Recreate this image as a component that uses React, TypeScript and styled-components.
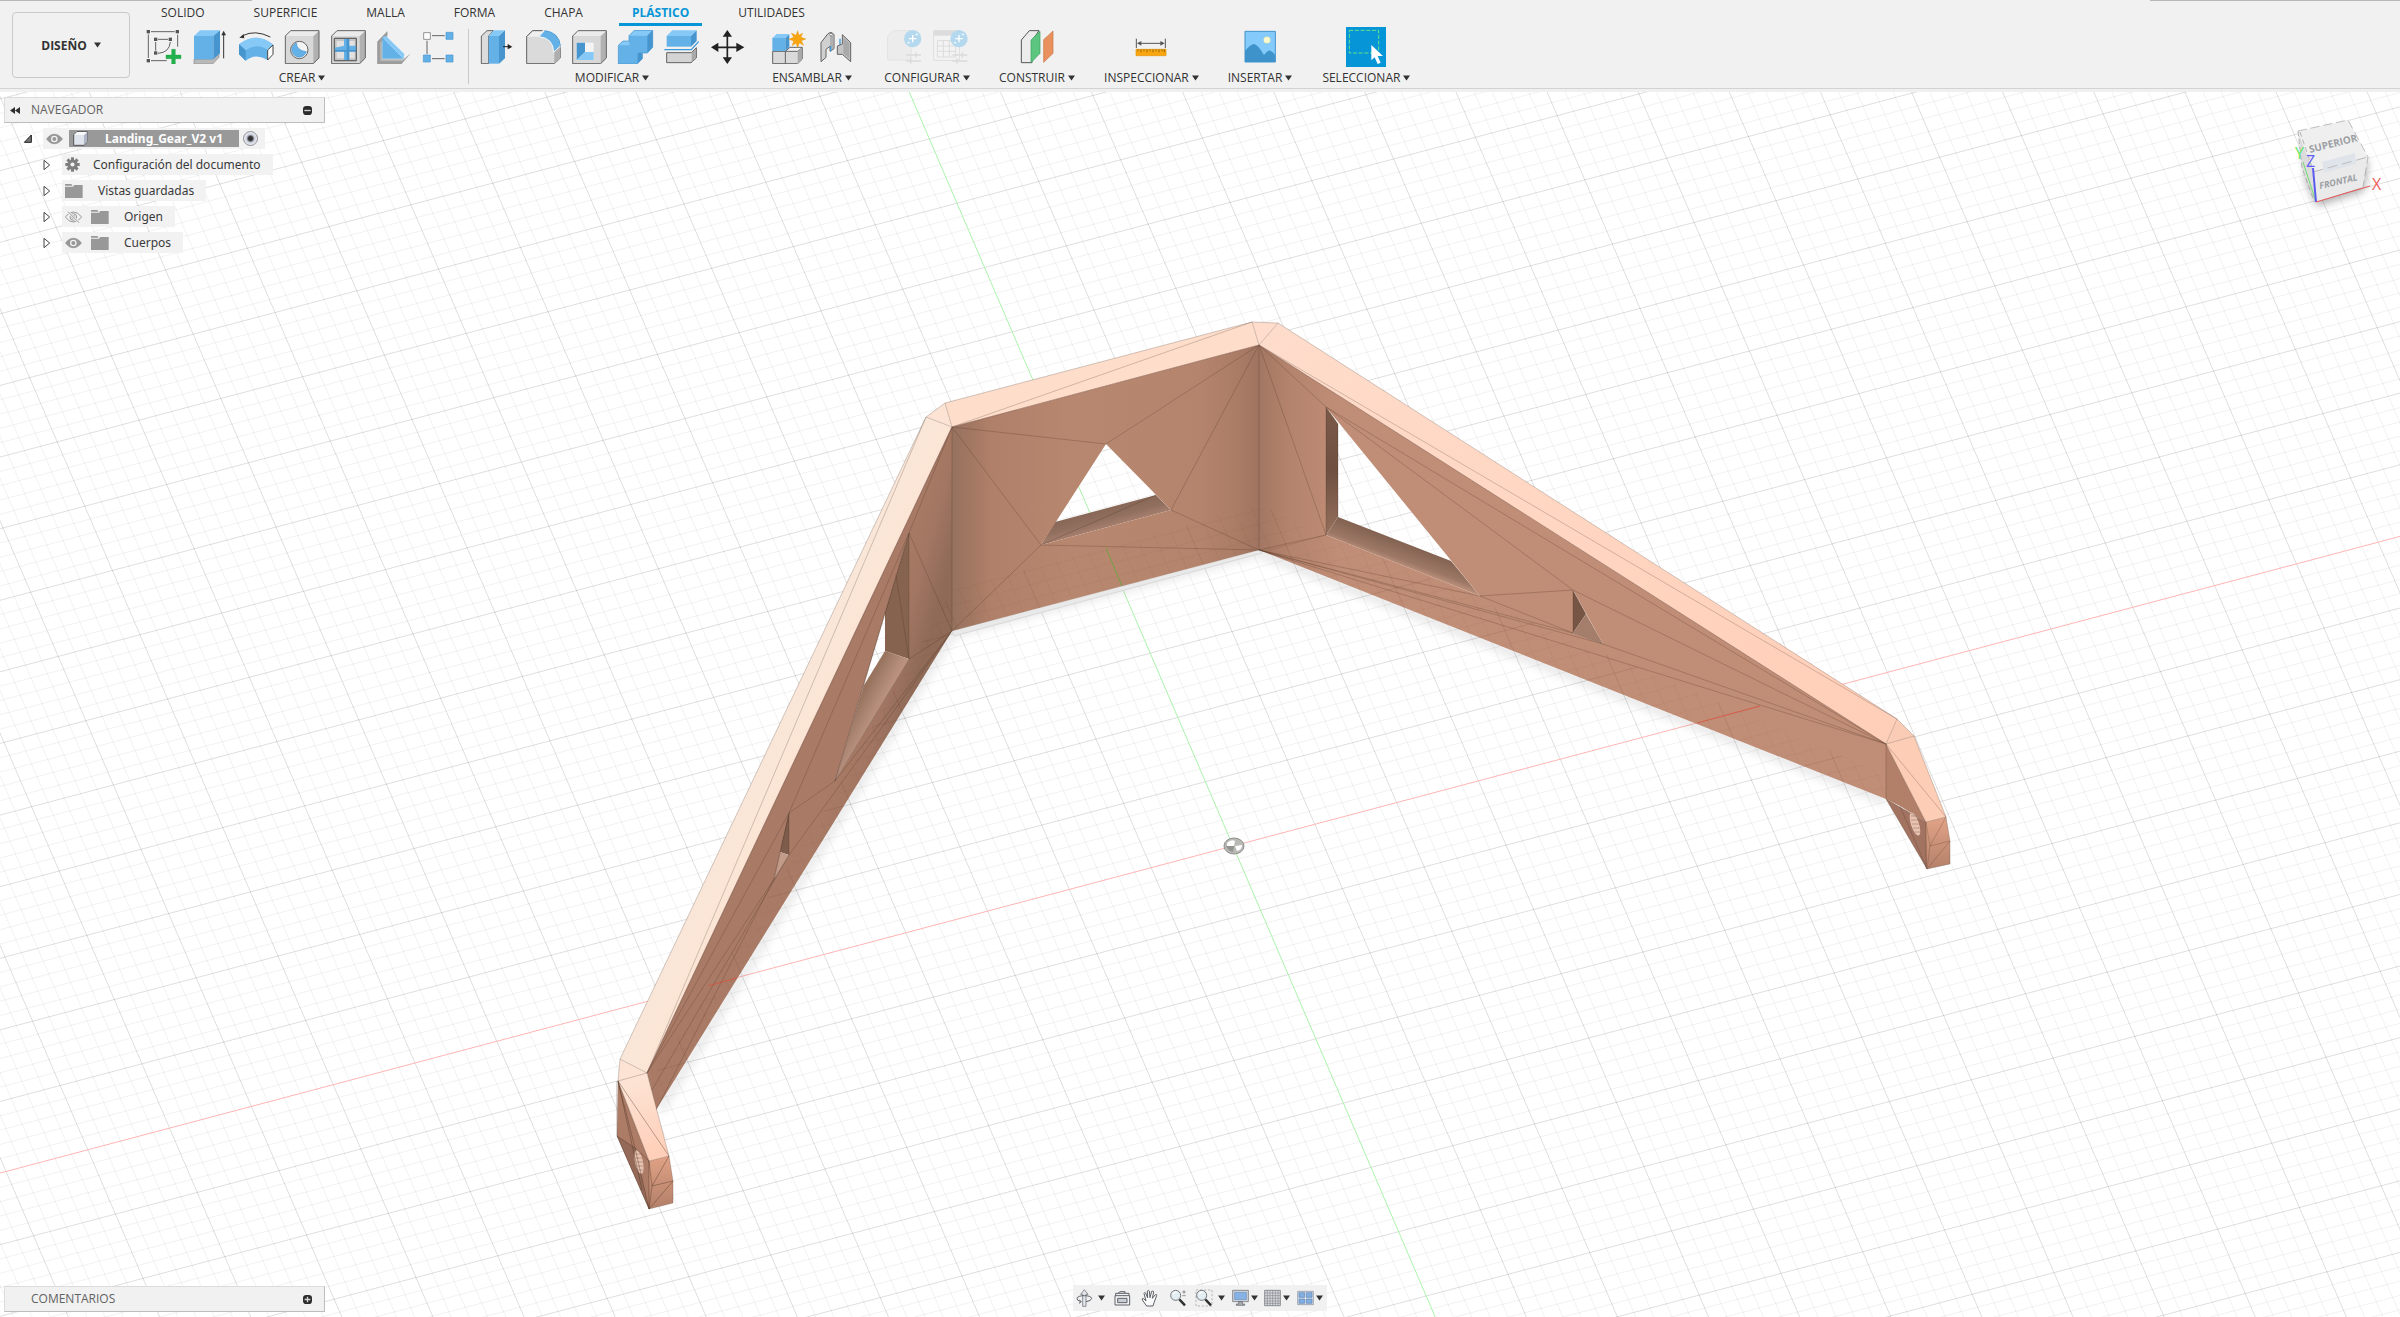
import React from "react";
import styled, { createGlobalStyle, css } from "styled-components";

const UI_FONT = '"Open Sans", "Noto Sans", sans-serif';
const TREE_FONT = '"Noto Sans", "Open Sans", sans-serif';

const GlobalStyle = createGlobalStyle`
  *, *::before, *::after { box-sizing: border-box; }
  body { margin: 0; font-family: ${UI_FONT}; font-size: 12px; color: #333; overflow: hidden; }
  button { font: inherit; color: inherit; background: none; border: 0; margin: 0; padding: 0; cursor: pointer; }
  svg { display: block; flex: none; }
`;

/* ---------- layout ---------- */

const Shell = styled.div`
  display: flex;
  flex-direction: column;
  height: 100vh;
  background: #fff;
`;

const Ribbon = styled.header`
  position: relative;
  z-index: 2;
  display: flex;
  align-items: flex-start;
  height: 89px;
  padding-left: 12px;
  border-bottom: 1px solid #d3d3d3;
  box-shadow: 0 3px 0 #f0f0f0;
  background:
    linear-gradient(#b9b9b9, #b9b9b9) left top / 252px 1px no-repeat,
    linear-gradient(#b9b9b9, #b9b9b9) right top / 250px 1px no-repeat,
    #f1f1f1;
`;

const WorkspaceButton = styled.button`
  display: flex;
  align-items: center;
  justify-content: center;
  gap: 7px;
  width: 118px;
  height: 66px;
  margin-top: 12px;
  border: 1px solid #c9c9c9;
  border-radius: 4px;
  font-weight: 700;
`;

const RibbonBody = styled.div`
  display: flex;
  flex-direction: column;
  min-width: 0;
  padding-left: 6px;
`;

const Tabs = styled.nav`
  display: flex;
  gap: 23px;
  height: 27px;
  padding-left: 12px;
`;

const Tab = styled.button<{ $active?: boolean }>`
  height: 26px;
  padding: 3px 13px 0;
  line-height: 20px;
  border-bottom: 3px solid transparent;
  ${(p) =>
    p.$active &&
    css`
      color: #0696d7;
      font-weight: 700;
      border-bottom-color: #0696d7;
    `}
`;

const Groups = styled.div`
  display: flex;
  height: 60px;
`;

const Group = styled.section<{ $pad: number }>`
  position: relative;
  display: flex;
  flex-direction: column;
  align-items: center;
  padding: 0 ${(p) => p.$pad}px;
  & + & { border-left: 1px solid transparent; }
  & + &::before {
    content: "";
    position: absolute;
    left: -1px;
    top: 2px;
    width: 1px;
    height: 55px;
    background: #c8c8c8;
  }
`;

const ToolRow = styled.div`
  display: flex;
  align-items: center;
  height: 40px;
`;

const Tool = styled.button<{ $selected?: boolean }>`
  display: flex;
  align-items: center;
  justify-content: center;
  width: ${(p) => (p.$selected ? 40 : 46)}px;
  height: 40px;
  overflow: hidden;
  background: ${(p) => (p.$selected ? "#0696d7" : "transparent")};
`;

const GroupLabel = styled.button`
  display: flex;
  align-items: center;
  gap: 3px;
  height: 16px;
  margin-top: 3px;
  line-height: 16px;
  white-space: nowrap;
`;

const Canvas = styled.main`
  position: relative;
  flex: 1;
  min-height: 0;
  display: flex;
  flex-direction: column;
  justify-content: space-between;
  padding: 8px 4px 5px;
`;

const Scene = styled.svg`
  position: absolute;
  inset: 0;
  width: 100%;
  height: 100%;
`;

const Browser = styled.aside`
  position: relative;
  display: flex;
  flex-direction: column;
  gap: 5px;
  width: 321px;
`;

const PanelBar = styled.div`
  display: flex;
  align-items: center;
  width: 321px;
  height: 26px;
  padding: 0 12px 0 5px;
  background: #f1f1f1;
  border: 1px solid #dcdcdc;
  border-right-color: #bdbdbd;
  border-bottom-color: #bdbdbd;
`;

const PanelTitle = styled.h2<{ $indent: number }>`
  flex: 1;
  margin: 0 0 0 ${(p) => p.$indent}px;
  font-size: 12px;
  font-weight: 400;
  line-height: 16px;
  color: #626262;
`;

const Tree = styled.ul`
  display: flex;
  flex-direction: column;
  gap: 5px;
  margin: 0;
  padding: 0;
  list-style: none;
  font-family: ${TREE_FONT};
  font-size: 12px;
  line-height: 21px;
  color: #3a3a3a;
`;

const TreeRow = styled.li<{ $root?: boolean }>`
  display: flex;
  align-items: center;
  height: 21px;
  padding-left: ${(p) => (p.$root ? 19 : 39)}px;
`;

const Toggle = styled.button<{ $root?: boolean }>`
  width: ${(p) => (p.$root ? 20 : 19)}px;
  height: 21px;
  display: flex;
  align-items: center;
`;

const RowBody = styled.div<{ $textGap: number; $end: number }>`
  display: flex;
  align-items: center;
  height: 21px;
  padding: 0 ${(p) => p.$end}px 0 3px;
  background: #f2f2f2;
  & > span { margin-left: ${(p) => p.$textGap}px; }
`;

const IconGap = styled.i`
  width: 9px;
`;

const Selected = styled.div`
  display: flex;
  align-items: center;
  gap: 17px;
  height: 17px;
  line-height: 17px;
  margin: 0 4px 0 6px;
  padding: 0 16px 0 4px;
  background: #999;
  color: #fff;
  font-weight: 700;
`;

const Radio = styled.input`
  appearance: none;
  width: 15px;
  height: 15px;
  margin: 0;
  border: 1px solid #8d8f95;
  border-radius: 50%;
  background: radial-gradient(circle, #333 0 2px, #c9cedb 4px, #f4f5f8 7px);
`;

const BottomRow = styled.footer`
  position: relative;
  display: flex;
  align-items: flex-end;
`;

const NavBar = styled.div`
  position: absolute;
  left: 50%;
  bottom: 1px;
  transform: translateX(-50%);
  display: flex;
  align-items: center;
  justify-content: space-between;
  height: 26px;
  width: 254px;
  padding: 0 4px 0 3px;
  background: #f1f1f1;
`;

const NavButton = styled.button<{ $gap?: number }>`
  display: flex;
  align-items: center;
  gap: ${(p) => p.$gap ?? 0}px;
  height: 26px;
  padding: 0 ${(p) => (p.$gap ? 0 : 2)}px;
`;

const Cube = styled.svg`
  position: absolute;
  top: 1px;
  right: 0;
`;

/* ---------- small glyphs ---------- */

const Caret = ({ size = 7 }: { size?: number }) => (
  <svg width={size} height={size - 1} viewBox="0 0 7 6">
    <path d="M0 0.5H7L3.5 5.5Z" fill="#333" />
  </svg>
);

const Eye = ({ off }: { off?: boolean }) => (
  <svg width="17" height="12" viewBox="0 0 51 36">
    <path
      d="M1 18Q12 3 25 3T50 18Q38 33 25 33T1 18Z"
      fill={off ? "none" : "#979797"}
      stroke="#979797"
      strokeWidth={off ? 3 : 1}
    />
    <circle cx="25" cy="18" r="10" fill={off ? "none" : "#f2f2f2"} stroke={off ? "#979797" : "none"} strokeWidth="3" />
    <circle cx="25" cy="18" r="6" fill="#979797" />
    {off && <path d="M9 2L42 35" stroke="#f2f2f2" strokeWidth="7" />}
    {off && <path d="M9 2L42 35" stroke="#979797" strokeWidth="3" />}
  </svg>
);

const Folder = () => (
  <svg width="18" height="14" viewBox="0 0 54 42">
    <path d="M0 0H19L23 5H0Z M0 8H24L28 3H53V42H0Z" fill="#989898" />
  </svg>
);

const Gear = () => (
  <svg width="15" height="15" viewBox="-22 -22 44 44">
    {[0, 45, 90, 135].map((a) => (
      <rect key={a} x="-4.5" y="-21" width="9" height="42" fill="#7e7e7e" transform={`rotate(${a})`} />
    ))}
    <circle r="15" fill="#7e7e7e" />
    <circle r="6" fill="#f2f2f2" />
  </svg>
);

const Collapse = () => (
  <svg width="10" height="7" viewBox="0 0 30 21">
    <path d="M15 0V21L0 10.500ZM30 0V21L15 10.500Z" fill="#2e2e2e" />
  </svg>
);

const RoundMark = ({ plus }: { plus?: boolean }) => (
  <svg width="9" height="9" viewBox="0 0 27 27">
    <rect width="27" height="27" rx="10" fill="#2b2b2b" />
    <path d={plus ? "M5 13.500H22M13.500 5V22" : "M4 13.500H23"} stroke="#d5d5d5" strokeWidth="4" />
  </svg>
);

const BodyCube = () => (
  <svg width="15" height="15" viewBox="0 0 45 45">
    <path d="M2 12L12 2H43V32L33 43H2Z" fill="#dfe3ec" stroke="#555" strokeWidth="3" strokeLinejoin="round" />
    <path d="M33 12L43 3V32L33 42Z" fill="#aeb4c4" />
    <path d="M3 12L12 3H42L33 12Z" fill="#f6f8fb" />
  </svg>
);

/* ---------- ribbon icons ---------- */

const BLUE = "#63b1e7";
const BLUE_TOP = "#86c9f7";
const BLUE_SIDE = "#4795cf";
const INK = "#636363";

const Art = ({ x, children, w = 138 }: { x: number; w?: number; children: React.ReactNode }) => (
  <svg width={w / 3} height="34" viewBox={`${x} 90 ${w} 102`} fill="none" strokeLinejoin="round">
    {children}
  </svg>
);

const SketchIcon = () => (
  <Art x={423}>
    <path d="M445 103V174M453 95H524M533 104V140M453 182H500" stroke={INK} strokeWidth="3" />
    <path d="M467 126V152M474 118H504M474 160Q508 158 511 126" stroke={INK} strokeWidth="3" />
    {[[445, 95], [532, 95], [445, 182], [467, 118], [511, 118], [467, 159]].map(([a, b]) => (
      <rect key={`${a}-${b}`} x={a - 5} y={b - 5} width="10" height="10" fill="#555" />
    ))}
    <path d="M515 148H526V165H543V176H526V192H515V176H498V165H515Z" fill="#22b14c" stroke="#169a3c" strokeWidth="1" />
  </Art>
);

const ExtrudeIcon = () => (
  <Art x={561}>
    <path d="M582 178H638L657 160V172L638 192H582Z" fill="#b9b9b9" stroke="#8b8b8b" strokeWidth="2" />
    <path d="M582 108H640V178H582Z" fill={BLUE} />
    <path d="M582 108L600 91H660L640 108Z" fill={BLUE_TOP} />
    <path d="M640 108L660 91V160L640 178Z" fill={BLUE_SIDE} />
    <path d="M671 100V175" stroke="#333" strokeWidth="3" />
    <path d="M671 92L678 106H664Z" fill="#333" />
  </Art>
);

const RevolveIcon = () => (
  <Art x={699}>
    <path d="M728 107Q765 88 811 111" stroke="#333" strokeWidth="3" />
    <path d="M718 113L731 102L733 115Z" fill="#333" />
    <path d="M717 133Q768 96 820 134L803 147V180Q768 158 737 182L717 163Z" fill={BLUE} />
    <path d="M717 133Q768 92 820 134L803 149Q768 128 737 151Z" fill={BLUE_TOP} />
    <path d="M717 133L737 151V182L717 163Z" fill={BLUE_SIDE} />
    <path d="M803 150L819 135V163L803 180Z" fill="#fff" stroke="#444" strokeWidth="3" />
  </Art>
);

const box = (x: number) => (
  <>
    <path d={`M${x} 108L${x + 16} 92H${x + 101}V174L${x + 84} 191H${x}Z`} fill="#d8d8d8" />
    <path d={`M${x + 84} 108L${x + 101} 92V174L${x + 84} 191Z`} fill="#b1b1b1" />
    <path d={`M${x} 108L${x + 16} 92H${x + 101}L${x + 84} 108Z`} fill="#ebebeb" />
    <path d={`M${x} 108L${x + 16} 92H${x + 101}V174L${x + 84} 191H${x}Z`} stroke={INK} strokeWidth="3" />
  </>
);

const HoleIcon = () => (
  <Art x={837}>
    {box(856)}
    <circle cx="898" cy="150" r="26" fill="#f4f4f4" stroke={INK} strokeWidth="3" />
    <path d="M889 129Q890 152 919 155A22 22 0 1 1 889 129Z" fill={BLUE} stroke={BLUE_SIDE} strokeWidth="2" />
  </Art>
);

const WebIcon = () => (
  <Art x={975}>
    {box(995)}
    <path d="M1003 115H1069V182H1003Z" fill="#c5c5c5" stroke={INK} strokeWidth="3" />
    <path d="M1010 123H1032V175H1010ZM1047 123H1064V175H1047Z" fill="#e2e2e2" />
    <path d="M1032 116H1047V137H1068V152H1047V181H1032V152H1004V143L1032 137Z" fill={BLUE} />
    <path d="M1040 116H1048V181H1040ZM1004 150H1068V155H1004Z" fill={BLUE_SIDE} />
    <path d="M1003 115H1069V182H1003Z" stroke={INK} strokeWidth="3" />
  </Art>
);

const RibIcon = () => (
  <Art x={1113}>
    <path d="M1132 125L1162 94V110L1147 123V178H1210L1231 161L1204 192H1132Z" fill="#b4b4b4" />
    <path d="M1132 125L1162 94V106L1140 129V184H1207L1231 161L1204 192H1132Z" fill="#9c9c9c" />
    <path d="M1147 112L1211 176H1147Z" fill={BLUE} />
    <path d="M1147 112L1158 108L1213 162L1211 176Z" fill={BLUE_TOP} />
  </Art>
);

const PatternIcon = () => (
  <Art x={1251}>
    <path d="M1296 107H1334M1281 122V162M1296 176H1334" stroke={INK} strokeWidth="3" />
    <rect x="1271" y="98" width="20" height="20" fill="#fff" stroke={INK} strokeWidth="2" />
    {[[1338, 97], [1270, 165], [1338, 165]].map(([a, b]) => (
      <rect key={`${a}${b}`} x={a} y={b} width="21" height="21" fill={BLUE} stroke={BLUE_SIDE} strokeWidth="2" />
    ))}
  </Art>
);

const PressPullIcon = () => (
  <Art x={45}>
    <path d="M67 108L84 92H103L89 108V191H67Z" fill="#dcdcdc" stroke={INK} strokeWidth="3" />
    <path d="M89 108H120V191H89Z" fill={BLUE} />
    <path d="M89 108L104 91H138L120 108Z" fill={BLUE_TOP} />
    <path d="M120 108L138 91V175L120 191Z" fill={BLUE_SIDE} />
    <path d="M132 140H148" stroke="#222" strokeWidth="3" />
    <path d="M146 132L160 140L146 148Z" fill="#222" />
  </Art>
);

const FilletIcon = () => (
  <Art x={183}>
    <path d="M203 110L221 92H245Q300 100 304 145V174L286 191H203Z" fill="#dadada" stroke={INK} strokeWidth="3" />
    <path d="M286 155L304 140V174L286 191Z" fill="#aeaeae" />
    <path d="M203 110L221 92H255L238 110Z" fill="#efefef" />
    <path d="M240 110L257 91Q302 98 304 138L284 157Q283 114 240 110Z" fill={BLUE} stroke="#f6f6f6" strokeWidth="3" />
    <path d="M257 92Q301 98 304 138" stroke={BLUE_SIDE} strokeWidth="3" />
    <path d="M203 110L221 92H250" stroke={INK} strokeWidth="3" />
  </Art>
);

const ShellIcon = () => (
  <Art x={321}>
    {box(341)}
    <path d="M353 128H404V180H353Z" fill="#f4f4f4" />
    <path d="M353 128H378V157L353 180Z" fill={BLUE_SIDE} />
    <path d="M353 180L378 156H404V180Z" fill={BLUE_TOP} />
  </Art>
);

const CombineIcon = () => (
  <Art x={459}>
    <path d="M478 136L492 123H510V107L526 91H581V142L565 159H550V176L534 192H478Z" fill={BLUE} />
    <path d="M510 107L526 91H581L565 107ZM478 136L492 123H510L512 136Z" fill={BLUE_TOP} />
    <path d="M565 107L581 91V142L565 159ZM536 158H550V176L536 191Z" fill={BLUE_SIDE} />
    <path d="M478 136L492 123H510V107L526 91H581V142L565 159H550V176L534 192H478Z" stroke={BLUE_SIDE} strokeWidth="2" />
  </Art>
);

const SplitIcon = () => (
  <Art x={597}>
    <path d="M623 108H696V140H623Z" fill={BLUE} />
    <path d="M623 108L640 91H713L696 108Z" fill={BLUE_TOP} />
    <path d="M696 108L713 91V124L696 140Z" fill={BLUE_SIDE} />
    <path d="M623 158H697L712 143V174L696 188H623Z" fill="#d4d4d4" stroke={INK} strokeWidth="3" />
    <path d="M698 159L711 146V173L698 186Z" fill="#a9a9a9" />
    <path d="M616 149H697L719 125" stroke="#f1f1f1" strokeWidth="10" />
    <path d="M616 149H697L719 125" stroke="#3c9ad8" strokeWidth="4" />
  </Art>
);

const MoveIcon = () => (
  <Art x={735}>
    <path d="M805 90L819 110H791ZM805 192L819 172H791ZM756 142L778 128V156ZM856 142L832 128V156Z" fill="#222" />
    <path d="M805 108V174M776 142H834" stroke="#222" strokeWidth="5" />
  </Art>
);

const ComponentIcon = () => (
  <Art x={918}>
    <path d="M938 154V191H1013L1027 177V143L1013 154Z" fill="#dadada" stroke={INK} strokeWidth="3" />
    <path d="M976 154V191M976 154L990 142H1027" stroke={INK} strokeWidth="3" />
    <path d="M1013 154L1027 143V177L1013 191Z" fill="#a9a9a9" />
    <path d="M937 114H976V153H937Z" fill={BLUE} />
    <path d="M937 114L950 102H988L976 114Z" fill={BLUE_TOP} />
    <path d="M976 114L988 103V141L976 153Z" fill={BLUE_SIDE} />
    <path
      d="M1013 92L1017 106L1028 99L1023 112L1038 117L1024 122L1031 136L1018 129L1013 143L1008 130L996 137L1001 123L986 118L1001 112L994 99L1008 106Z"
      fill="#f8a50f"
      stroke="#e18f00"
      strokeWidth="1"
    />
  </Art>
);

const JointIcon = () => (
  <Art x={1056}>
    <path d="M1083 128L1103 102Q1114 92 1122 104V146L1110 154V139L1098 148V172L1083 185Z" fill="#d0d0d0" stroke={INK} strokeWidth="3" />
    <path d="M1110 108H1120V146H1110Z" fill="#b0b0b0" />
    <circle cx="1113" cy="104" r="4" fill="#fff" stroke={INK} strokeWidth="2" />
    <path d="M1112 138V154M1140 116V134" stroke="#3c9ad8" strokeWidth="4" />
    <path d="M1147 104L1172 128V185L1147 163H1132V138L1147 132Z" fill="#c4c4c4" stroke={INK} strokeWidth="3" />
    <path d="M1150 112L1168 130V176L1150 160Z" fill="#a9a9a9" />
  </Art>
);

const badge = (cx: number) => (
  <>
    <circle cx={cx} cy="116" r="26" fill="#b4d9ee" />
    <path d={`M${cx} 105V127M${cx - 11} 116H${cx + 11}`} stroke="#fff" strokeWidth="4" />
    <path d={`M${cx + 12} 100v7M${cx + 8} 103h8M${cx - 12} 125v7M${cx - 16} 128h8`} stroke="#fff" strokeWidth="2" />
    <path d={`M${cx - 20} 165H${cx + 25}M${cx - 20} 183H${cx + 25}M${cx + 10} 157V173M${cx - 6} 175V191`} stroke="#dadada" strokeWidth="4" />
  </>
);

const ConfigBodyIcon = () => (
  <Art x={1260}>
    <path d="M1280 108L1297 92H1350V180H1280Z" fill="#ececec" stroke="#e2e2e2" strokeWidth="3" />
    {badge(1355)}
  </Art>
);

const ConfigTableIcon = () => (
  <Art x={1398}>
    <path d="M1418 92H1495V181H1418Z" fill="#f3f3f3" stroke="#dedede" strokeWidth="3" />
    <path d="M1418 92H1495V107H1418Z" fill="#dcdcdc" />
    <path d="M1429 122H1484V171H1429ZM1429 138H1484M1429 154H1484M1447 122V171M1465 122V171" stroke="#dcdcdc" strokeWidth="3" />
    {badge(1494)}
  </Art>
);

const PlaneIcon = () => (
  <Art x={822}>
    <path d="M844 120L868 92H897L876 122V188H844Z" fill="#ececec" stroke="#555" strokeWidth="3" />
    <path d="M873 120L900 94V160L873 188Z" fill="#5cc681" stroke="#3a9d5d" strokeWidth="2" />
    <path d="M911 119L939 93V160L911 187Z" fill="#e8915e" stroke="#c9733f" strokeWidth="2" />
  </Art>
);

const MeasureIcon = () => (
  <Art x={87}>
    <path d="M112 116V144M199 116V144M120 130H192" stroke="#555" strokeWidth="3" />
    <path d="M114 130L127 123V137ZM197 130L184 123V137Z" fill="#555" />
    <path d="M111 148H201V167H111Z" fill="#f9a60f" stroke="#e39200" strokeWidth="2" />
    <path d="M117 148v6M126 148v9M135 148v6M144 148v9M153 148v6M162 148v9M171 148v6M180 148v9M189 148v6M196 148v9" stroke="#6b4a08" strokeWidth="2" />
  </Art>
);

const InsertIcon = () => (
  <Art x={409}>
    <path d="M433 94H524V186H433Z" fill="#84cbfb" />
    <path d="M433 153Q450 132 460 132Q470 132 490 165Q502 150 508 152Q515 153 524 166V186H433Z" fill="#3f93cb" />
    <circle cx="499" cy="120" r="10" fill="#fdf9cd" stroke="#e6e2a0" strokeWidth="1" />
    <path d="M433 94H524V186H433Z" stroke="#4192cb" strokeWidth="3" />
  </Art>
);

const SelectIcon = () => (
  <svg width="40" height="40" viewBox="738 82 120 120">
    <path d="M748 92H836V160H748Z" fill="none" stroke="#67e08a" strokeWidth="3" strokeDasharray="12 5" />
    <path d="M814 136V182L824 173L833 193L842 189L833 169H849Z" fill="#fff" />
  </svg>
);

/* ---------- scene ---------- */

// Ground plane basis: one major cell along X, one major cell along Y.
const ORIGIN = [1233, 846];
const U = [81.8, -21.7];
const V = [27.6, 64.28];

const gridPoint = (a: number, b: number) =>
  `${(ORIGIN[0] + U[0] * a + V[0] * b).toFixed(1)} ${(ORIGIN[1] + U[1] * a + V[1] * b).toFixed(1)}`;

const gridPath = (major: boolean) => {
  const parts: string[] = [];
  for (let i = -130; i <= 130; i++) {
    if ((i % 5 === 0) !== major || i === 0) continue;
    const k = i / 5;
    parts.push(`M${gridPoint(k, -26)}L${gridPoint(k, 26)}`);
    parts.push(`M${gridPoint(-26, k)}L${gridPoint(26, k)}`);
  }
  return parts.join("");
};

const MAJOR = gridPath(true);
const MINOR = gridPath(false);

const Linear = ({ id, x1, y1, x2, y2, stops }: { id: string; x1: number; y1: number; x2: number; y2: number; stops: [number, string][] }) => (
  <linearGradient id={id} gradientUnits="userSpaceOnUse" x1={x1} y1={y1} x2={x2} y2={y2}>
    {stops.map(([o, c]) => (
      <stop key={o} offset={o} stopColor={c} />
    ))}
  </linearGradient>
);

const BACK = "M952 427L1259 345V550L952 631ZM1106 444L1041 545L1171 510Z";
const RIGHT = "M1259 345L1886 744V799L1259 550ZM1326 407V535L1480 596ZM1573 590V633L1603 644Z";
const LEFT = "M952 427L647 1073L656 1110L952 631ZM909 533V659L835 781ZM789 813V855L774 879Z";

const Model = () => (
  <g strokeLinejoin="round">
    <defs>
      <Linear id="back" x1={952} y1={0} x2={1259} y2={0} stops={[[0, "#96725e"], [0.06, "#a27762"], [0.13, "#b0806a"], [0.4, "#b8876f"], [0.8, "#b5846d"], [0.93, "#aa7c66"], [1, "#9f7460"]]} />
      <Linear id="right" x1={1259} y1={0} x2={1340} y2={0} stops={[[0, "#a27762"], [0.4, "#b5846e"], [1, "#c08d76"]]} />
      <Linear id="left" x1={952} y1={560} x2={900} y2={545} stops={[[0, "#8e6a57"], [0.5, "#a27662"], [1, "#a97b66"]]} />
      <Linear id="topLeft" x1={780} y1={720} x2={818} y2={738} stops={[[0, "#fae6d8"], [0.6, "#fbe6d6"], [1, "#fedccb"]]} />
      <Linear id="topRight" x1={1259} y1={330} x2={1900} y2={740} stops={[[0, "#fedccb"], [0.4, "#ffd7c3"], [1, "#ffceb8"]]} />
      <Linear id="wallDark" x1={1326} y1={407} x2={1338} y2={535} stops={[[0, "#7b5949"], [0.5, "#6f5041"], [1, "#95705d"]]} />
      <Linear id="sill" x1={1050} y1={515} x2={1058} y2={545} stops={[[0, "#80604f"], [0.6, "#927060"], [0.9, "#a98170"], [1, "#c49c8a"]]} />
      <Linear id="sillRight" x1={1402} y1={540} x2={1393} y2={564} stops={[[0, "#80604f"], [0.7, "#9c7765"], [1, "#c0947f"]]} />
      <Linear id="sillLeft" x1={860} y1={700} x2={882} y2={712} stops={[[0, "#98745f"], [0.6, "#b28b78"], [1, "#c09682"]]} />
      <Linear id="foot" x1={640} y1={1080} x2={665} y2={1150} stops={[[0, "#fde3d4"], [1, "#ffcfb9"]]} />
      <Linear id="toe" x1={660} y1={1156} x2={662} y2={1206} stops={[[0, "#e0a286"], [1, "#b5816a"]]} />
      <Linear id="toeR" x1={1938} y1={819} x2={1940} y2={868} stops={[[0, "#e0a286"], [1, "#b5816a"]]} />
      <filter id="soft" x="-10%" y="-10%" width="120%" height="120%">
        <feGaussianBlur stdDeviation="5" />
      </filter>
      <clipPath id="lowBand">
        <path d="M952 590L1259 505V550L952 631ZM1259 505L1886 775V799L1259 550ZM952 590L830 800L651 1080L656 1110L952 631Z" />
      </clipPath>
    </defs>

    <path d="M952 633L1259 552L1886 800" fill="none" stroke="#000" strokeOpacity="0.1" strokeWidth="9" filter="url(#soft)" />
    <path d="M952 633L660 1110" fill="none" stroke="#000" strokeOpacity="0.1" strokeWidth="8" filter="url(#soft)" />
    <path d="M952 631L1259 550L1262 553L954 636Z" fill="#e9e9e9" stroke="#d8d8d8" strokeWidth="1" />

    {/* recessed walls of the cut-outs */}
    <path d="M1055 522L1156 495L1171 510L1041 545Z" fill="url(#sill)" />
    <path d="M1326 407L1338 424V517L1326 535Z" fill="url(#wallDark)" />
    <path d="M1326 535L1338 517L1451 561L1480 596Z" fill="url(#sillRight)" />
    <path d="M1573 590L1586 614L1573 633Z" fill="#765545" />
    <path d="M1573 633L1586 614L1603 644Z" fill="#a57e6b" />
    <path d="M909 533V659L885 651V612Z" fill="#86634f" />
    <path d="M885 651L909 659L835 781L864 685Z" fill="url(#sillLeft)" />
    <path d="M789 813V855L780 852L783 832Z" fill="#7d5c4c" />
    <path d="M789 855L774 879L780 852Z" fill="#c39b88" />

    <path d={BACK} fill="url(#back)" fillRule="evenodd" />
    <path d={RIGHT} fill="url(#right)" fillRule="evenodd" />
    <path d={LEFT} fill="url(#left)" fillRule="evenodd" />

    <g clipPath="url(#lowBand)" stroke="#5a3020" fill="none">
      <path d={MINOR} strokeOpacity="0.04" />
      <path d={MAJOR} strokeOpacity="0.12" />
    </g>
    <path d="M1106 548L1122 586" stroke="#62a63c" strokeOpacity="0.8" strokeWidth="1" />
    <path d="M1697 723L1760 706M708 986L737 978" stroke="#d8503f" strokeOpacity="0.8" strokeWidth="1" />

    {/* top rim */}
    <path d="M926 417L945 403L952 427Z" fill="#fce3d4" />
    <path d="M926 417L952 427L647 1073L620 1059Z" fill="url(#topLeft)" />
    <path d="M945 403L1252 322L1259 345L952 427Z" fill="#feddcb" />
    <path d="M1252 322L1278 323L1259 345Z" fill="#ffdccb" />
    <path d="M1278 323L1897 719L1886 744L1259 345Z" fill="url(#topRight)" />
    <path d="M1897 719L1914 736L1886 744Z" fill="#fbccb5" />

    {/* right foot */}
    <path d="M1886 744L1926 822L1900 806L1886 799Z" fill="#b27f69" />
    <path d="M1886 799L1926 822L1930 846L1927 869Z" fill="#a17360" />
    <path d="M1886 744L1914 736L1946 817L1926 822Z" fill="#fdcdb6" />
    <path d="M1926 822L1946 817L1950 841V864L1927 869Z" fill="url(#toeR)" />
    <ellipse cx="1915" cy="824" rx="4" ry="12" transform="rotate(-18 1915 824)" fill="#e6c3b2" />
    <path d="M1911 816h7M1911 820h9M1912 824h9M1913 828h8M1915 832h7" stroke="#a97662" strokeOpacity="0.6" strokeWidth="1" />

    {/* left foot */}
    <path d="M618 1081L649 1161V1209L617 1136Z" fill="#ad7c67" />
    <path d="M617 1136L635 1148L649 1209Z" fill="#946957" />
    <path d="M620 1059L647 1073L618 1081Z" fill="#fde3d4" />
    <path d="M618 1081L647 1073L669 1156L649 1161Z" fill="url(#foot)" />
    <path d="M649 1161L669 1156L673 1181V1203L649 1209Z" fill="url(#toe)" />
    <ellipse cx="639" cy="1162" rx="4" ry="12" transform="rotate(-12 639 1162)" fill="#e6c3b2" />
    <path d="M635 1154h7M635 1158h8M636 1162h8M637 1166h7M638 1170h5" stroke="#a97662" strokeOpacity="0.6" strokeWidth="1" />

    {/* tessellation edges */}
    <g fill="none" stroke="#3d2418" strokeOpacity="0.22" strokeWidth="1">
      <path d="M952 427L1106 444L1259 345L1171 510L1259 550L1041 545L952 427M1041 545L952 631M952 427V631M1259 345V550" />
      <path d="M1041 545L1156 495" />
      <path d="M1259 345L1326 535L1259 550M1259 345L1326 407L1573 590L1480 596L1573 633L1259 550M1326 407V535M1326 407L1886 744M1326 407L1338 424V517" />
      <path d="M1573 590L1886 744L1603 644L1573 633V590M1259 550L1480 596M1259 550L1886 744M1259 550L1603 644M1886 744V799" />
      <path d="M952 427L909 533V659L952 631L909 533M909 659L835 781L952 631M835 781L789 813L909 533M789 813V855L952 631M774 879L789 855M774 879L656 1110M952 427L647 1073L789 813M647 1073L774 879M789 855L652 1090M909 659L896 575" />
      <path d="M909 533L835 781M789 813L774 879" strokeOpacity="0.4" />
      <path d="M1886 744L1946 817M1886 799L1926 822V869M1886 799L1927 869M1926 822L1930 846L1950 841M1930 846L1946 817M1927 869L1950 841M1886 744L1926 822M1900 806L1927 869M1930 846L1927 869" />
      <path d="M618 1081L669 1156M618 1081L649 1161V1209L617 1136V1081M618 1081L635 1148L649 1161M617 1136L635 1148L649 1209M652 1186L673 1181M652 1186L669 1156M649 1209L673 1181M649 1161L652 1186L649 1209M618 1081L642 1190" strokeOpacity="0.35" />
    </g>
    <g fill="none" stroke="#5b4a42" strokeOpacity="0.28" strokeWidth="1">
      <path d="M926 417L945 403L1252 322L1278 323L1897 719L1914 736L1946 817L1950 841V864L1927 869" />
      <path d="M926 417L620 1059L618 1081M926 417L952 427L945 403M1252 322L1259 345L1278 323M952 427L1252 322M1259 345L1897 719L1886 744L1914 736" />
      <path d="M926 417L647 1073L620 1059M647 1073L618 1081M647 1073L669 1156L649 1161M669 1156L673 1181V1203L649 1209M1926 822L1946 817" />
    </g>
    <path d="M952 427L647 1073M952 427L1259 345L1886 744" fill="none" stroke="#7e5747" strokeOpacity="0.6" strokeWidth="1" />
  </g>
);

const OriginMark = () => (
  <g>
    <ellipse cx="1234" cy="846" rx="10" ry="8" fill="#b9bab6" stroke="#8f908d" strokeWidth="1" />
    <path d="M1227 843Q1231 839 1235 841L1234 846L1227 846ZM1235 846L1242 845Q1242 850 1237 851Z" fill="#fff" />
    <path d="M1226 846Q1228 851 1233 852L1234 846Z" fill="#91938f" />
  </g>
);

const Viewport = () => (
  <Scene viewBox="0 89 2400 1228" preserveAspectRatio="xMidYMid slice" role="img" aria-label="Landing_Gear_V2">
    <path d={MINOR} fill="none" stroke="#000" strokeOpacity="0.055" strokeWidth="1" />
    <path d={MAJOR} fill="none" stroke="#000" strokeOpacity="0.13" strokeWidth="1" />
    <path d={`M${gridPoint(-26, 0)}L${gridPoint(26, 0)}`} stroke="#ffb5b5" strokeWidth="1" />
    <path d={`M${gridPoint(0, -26)}L${gridPoint(0, 26)}`} stroke="#abf3ab" strokeWidth="1" />
    <Model />
    <OriginMark />
  </Scene>
);

const ViewCube = () => (
  <Cube width="140" height="140" viewBox="0 0 140 140" role="img" aria-label="ViewCube">
    <defs>
      <filter id="cubeShadow" x="-30%" y="-30%" width="160%" height="160%">
        <feGaussianBlur stdDeviation="4" />
      </filter>
    </defs>
    <path d="M45 60L108 70L104 101L57 116L46 92Z" fill="#000" opacity="0.32" filter="url(#cubeShadow)" />
    <path d="M38 41L53 82L56 112L42 78Z" fill="#dcdcdc" />
    <path d="M38 41L88 30L108 67L53 82Z" fill="#efefef" />
    <path d="M53 82L108 67L103 97L56 112Z" fill="#eaeaea" />
    <path d="M62 72L95 63L96 74L64 83Z" fill="#dfe3ea" />
    <path d="M38 41L88 30L108 67L103 97" fill="none" stroke="#a5a5a5" strokeOpacity="0.7" strokeWidth="1" strokeDasharray="9 4" />
    <path d="M53 82L108 67" stroke="#bcbcbc" strokeWidth="1" strokeDasharray="10 5" />
    <path d="M38 41L42 78L53 108M40 42L53 80" fill="none" stroke="#9a9a9a" strokeOpacity="0.7" strokeWidth="1" strokeDasharray="5 3" />
    <text x="50" y="63" transform="rotate(-14 50 63)" fontFamily={UI_FONT} fontSize="10" fontWeight="700" fill="#9b9ea3">
      SUPERIOR
    </text>
    <text x="60" y="99" transform="rotate(-13 60 99)" fontFamily={UI_FONT} fontSize="9" fontWeight="700" fontStyle="italic" fill="#9b9ea3">
      FRONTAL
    </text>
    <path d="M56 112L43 72" stroke="#6fdc6f" strokeWidth="1" />
    <path d="M56 112L53 78" stroke="#5b5bf0" strokeWidth="2" />
    <path d="M56 112L110 96" stroke="#ec5b5b" strokeWidth="1" />
    <g fontFamily={UI_FONT} fontSize="16">
      <text x="35" y="69" fill="#62e862">Y</text>
      <text x="46" y="77" fill="#5f5ff2">Z</text>
      <text x="112" y="100" fill="#f06060">X</text>
    </g>
  </Cube>
);

/* ---------- navigation bar icons ---------- */

const NavArt = ({ children, w = 17 }: { children: React.ReactNode; w?: number }) => (
  <svg width={w} height="18" viewBox={`0 0 ${w * 3} 54`} fill="none" stroke="#5d6066" strokeWidth="3" strokeLinejoin="round">
    {children}
  </svg>
);

const OrbitIcon = () => (
  <NavArt>
    <path d="M20 52V16H14L25 2L36 16H30V52Z" fill="#e2e6ec" strokeWidth="2" />
    <path d="M14 38Q2 34 3 28Q6 20 25 20T47 28Q46 36 30 38M16 38L10 33M16 38L9 43" />
  </NavArt>
);
const LookIcon = () => (
  <NavArt>
    <path d="M3 20H47V48H3Z" fill="#f4f4f4" />
    <path d="M11 28H39V41H11Z" fill="#c9ced6" />
    <path d="M5 19V13H12L18 8H33V13H45V19M12 13H33" />
  </NavArt>
);
const HandIcon = () => (
  <NavArt>
    <path d="M17 51L4 33Q2 27 8 29L15 36L9 13Q11 8 14 12L20 27L19 6Q22 2 25 6L27 26L32 7Q36 4 38 9L34 28L43 17Q48 15 47 20L39 41L36 51Z" fill="#fbfbfb" strokeWidth="3" />
  </NavArt>
);
const Lens = () => (
  <>
    <path d="M31 31L48 49" stroke="#2f2f2f" strokeWidth="7" />
    <circle cx="20" cy="19" r="15" fill="#e3eef2" stroke="#74787c" />
    <path d="M12 16Q15 9 23 9" stroke="#fff" strokeWidth="4" />
  </>
);
const ZoomIcon = () => (
  <NavArt w={18}>
    <Lens />
    <path d="M45 4V14M40 9H50M40 20H50" strokeWidth="2" />
  </NavArt>
);
const FitIcon = () => (
  <NavArt w={18}>
    <path d="M3 3H51V51H3Z" strokeWidth="2" strokeDasharray="7 5" stroke="#999" />
    <Lens />
  </NavArt>
);
const DisplayIcon = () => (
  <NavArt>
    <path d="M2 4H49V38H2Z" fill="#d3d6db" strokeWidth="2" />
    <path d="M8 10H43V32H8Z" fill="#86b2e6" stroke="#6a8fc0" strokeWidth="2" />
    <path d="M20 38H31V45H38V49H13V45H20Z" fill="#a9adb4" strokeWidth="2" />
  </NavArt>
);
const GridIcon = () => (
  <NavArt>
    <path d="M2 4H49V50H2Z" fill="#d9dbe0" strokeWidth="2" />
    <path d="M10 4V50M18 4V50M26 4V50M34 4V50M42 4V50M2 12H49M2 20H49M2 28H49M2 36H49M2 43H49" stroke="#85888e" strokeWidth="2" />
  </NavArt>
);
const ViewsIcon = () => (
  <NavArt>
    <path d="M2 7H49V47H2Z" fill="#dfe3ea" strokeWidth="2" stroke="#7f8897" />
    <path d="M6 11H23V25H6ZM28 11H45V25H28ZM6 30H23V43H6ZM28 30H45V43H28Z" fill="#82aee0" stroke="#5f85b5" strokeWidth="2" />
  </NavArt>
);

/* ---------- data ---------- */

type ToolDef = [string, React.ComponentType];

const TABS = ["SOLIDO", "SUPERFICIE", "MALLA", "FORMA", "CHAPA", "PLÁSTICO", "UTILIDADES"];

const GROUPS: { label: string; pad: number; tools: ToolDef[]; selected?: boolean }[] = [
  { label: "CREAR", pad: 5, tools: [["Boceto", SketchIcon], ["Extruir", ExtrudeIcon], ["Revolución", RevolveIcon], ["Agujero", HoleIcon], ["Red", WebIcon], ["Nervio", RibIcon], ["Patrón", PatternIcon]] },
  { label: "MODIFICAR", pad: 5, tools: [["Pulsar", PressPullIcon], ["Empalme", FilletIcon], ["Vaciado", ShellIcon], ["Combinar", CombineIcon], ["Dividir", SplitIcon], ["Mover", MoveIcon]] },
  { label: "ENSAMBLAR", pad: 10, tools: [["Componente", ComponentIcon], ["Unión", JointIcon]] },
  { label: "CONFIGURAR", pad: 12, tools: [["Configuración", ConfigBodyIcon], ["Tabla", ConfigTableIcon]] },
  { label: "CONSTRUIR", pad: 13, tools: [["Plano", PlaneIcon]] },
  { label: "INSPECCIONAR", pad: 15, tools: [["Medir", MeasureIcon]] },
  { label: "INSERTAR", pad: 13, tools: [["Imagen", InsertIcon]] },
  { label: "SELECCIONAR", pad: 16, tools: [["Seleccionar", SelectIcon]], selected: true },
];

const NAV: { name: string; icon: React.ComponentType; gap?: number }[] = [
  { name: "Órbita", icon: OrbitIcon, gap: 5 },
  { name: "Mirar a", icon: LookIcon },
  { name: "Encuadre", icon: HandIcon },
  { name: "Zoom", icon: ZoomIcon },
  { name: "Ajustar", icon: FitIcon, gap: 5 },
  { name: "Visualización", icon: DisplayIcon, gap: 2 },
  { name: "Rejilla", icon: GridIcon, gap: 2 },
  { name: "Ventanas", icon: ViewsIcon, gap: 2 },
];

const NODES: { label: string; kind: "gear" | "folder"; eye?: "on" | "off" }[] = [
  { label: "Configuración del documento", kind: "gear" },
  { label: "Vistas guardadas", kind: "folder" },
  { label: "Origen", kind: "folder", eye: "off" },
  { label: "Cuerpos", kind: "folder", eye: "on" },
];

export default function App() {
  return (
    <Shell>
      <GlobalStyle />
      <Ribbon>
        <WorkspaceButton>
          DISEÑO <Caret />
        </WorkspaceButton>
        <RibbonBody>
          <Tabs>
            {TABS.map((t) => (
              <Tab key={t} $active={t === "PLÁSTICO"}>
                {t}
              </Tab>
            ))}
          </Tabs>
          <Groups>
            {GROUPS.map((g) => (
              <Group key={g.label} $pad={g.pad}>
                <ToolRow>
                  {g.tools.map(([name, Icon]) => (
                    <Tool key={name} aria-label={name} $selected={g.selected}>
                      <Icon />
                    </Tool>
                  ))}
                </ToolRow>
                <GroupLabel>
                  {g.label} <Caret />
                </GroupLabel>
              </Group>
            ))}
          </Groups>
        </RibbonBody>
      </Ribbon>

      <Canvas>
        <Viewport />
        <ViewCube />
        <Browser>
          <PanelBar>
            <Collapse />
            <PanelTitle $indent={11}>NAVEGADOR</PanelTitle>
            <button aria-label="Contraer">
              <RoundMark />
            </button>
          </PanelBar>
          <Tree>
            <TreeRow $root>
              <Toggle $root aria-label="Contraer">
                <svg width="10" height="10" viewBox="0 0 30 30">
                  <path d="M25 3V25H4Z" fill="#777" stroke="#1c1c1c" strokeWidth="3" />
                </svg>
              </Toggle>
              <RowBody $textGap={0} $end={7}>
                <Eye />
                <Selected>
                  <BodyCube />
                  Landing_Gear_V2 v1
                </Selected>
                <Radio type="radio" name="active" defaultChecked aria-label="Activar componente" />
              </RowBody>
            </TreeRow>
            {NODES.map((n) => (
              <TreeRow key={n.label}>
                <Toggle aria-label="Expandir">
                  <svg width="8" height="12" viewBox="0 0 24 36">
                    <path d="M3 4L20 18L3 32Z" fill="#fff" stroke="#444" strokeWidth="3" />
                  </svg>
                </Toggle>
                <RowBody $textGap={n.kind === "gear" ? 13 : 15} $end={12}>
                  {n.eye && <Eye off={n.eye === "off"} />}
                  {n.eye && <IconGap />}
                  {n.kind === "gear" ? <Gear /> : <Folder />}
                  <span>{n.label}</span>
                </RowBody>
              </TreeRow>
            ))}
          </Tree>
        </Browser>

        <BottomRow>
          <PanelBar>
            <PanelTitle $indent={21}>COMENTARIOS</PanelTitle>
            <button aria-label="Añadir comentario">
              <RoundMark plus />
            </button>
          </PanelBar>
          <NavBar>
            {NAV.map(({ name, icon: Icon, gap }) => (
              <NavButton key={name} aria-label={name} $gap={gap}>
                <Icon />
                {gap && <Caret />}
              </NavButton>
            ))}
          </NavBar>
        </BottomRow>
      </Canvas>
    </Shell>
  );
}
